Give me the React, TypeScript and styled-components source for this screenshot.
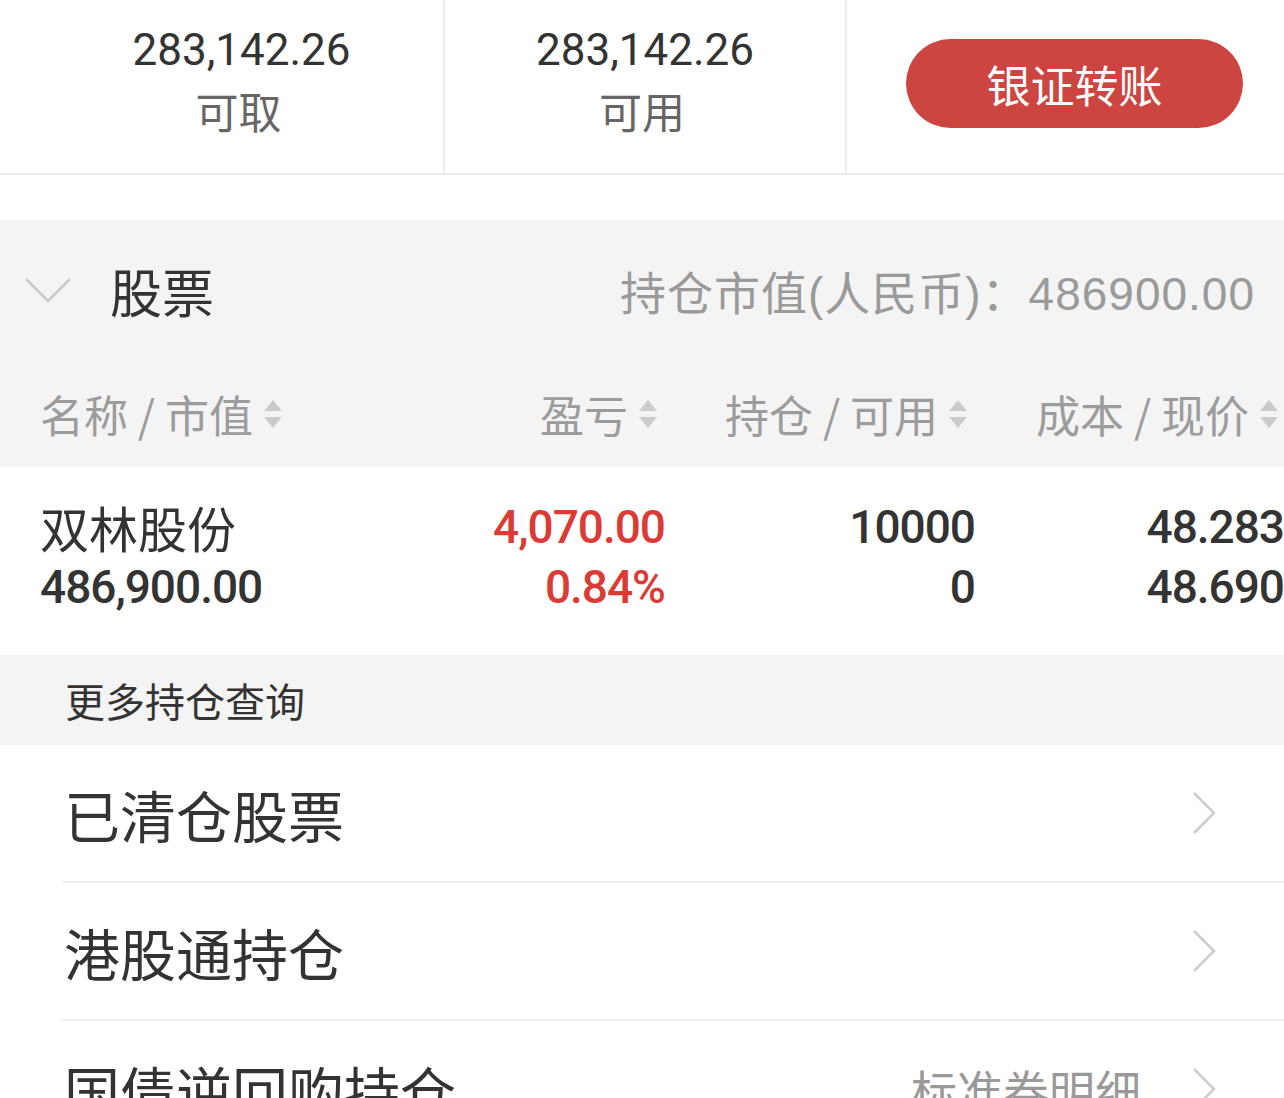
import styled, { createGlobalStyle } from "styled-components";

const GlobalStyle = createGlobalStyle`
  html, body {
    margin: 0;
    padding: 0;
    background: #ffffff;
    overflow: hidden;
  }
`;

const SortIcon = () => (
  <svg width="20" height="32" viewBox="0 0 20 32">
    <polygon points="10,2 19,13 1,13" fill="#cbcbcb" />
    <polygon points="1,19 19,19 10,30" fill="#cbcbcb" />
  </svg>
);

const ChevronRight = () => (
  <svg width="26" height="44" viewBox="0 0 26 44">
    <polyline
      points="3,2 23,22 3,42"
      fill="none"
      stroke="#cdcdcd"
      strokeWidth="2.5"
    />
  </svg>
);

const ChevronDown = () => (
  <svg width="48" height="28" viewBox="0 0 48 28">
    <polyline
      points="2,3 24,25 46,3"
      fill="none"
      stroke="#cbcbcb"
      strokeWidth="2.5"
    />
  </svg>
);

const moreItems = [
  { title: "已清仓股票", extra: "" },
  { title: "港股通持仓", extra: "" },
  { title: "国债逆回购持仓", extra: "标准券明细" },
];

const App = () => {
  return (
    <Page>
      <GlobalStyle />
      <Summary>
        <SummaryCell $divider $shift={40}>
          <Amount>283,142.26</Amount>
          <AmountLabel>可取</AmountLabel>
        </SummaryCell>
        <SummaryCell $divider $shift={0}>
          <Amount>283,142.26</Amount>
          <AmountLabel>可用</AmountLabel>
        </SummaryCell>
        <SummaryCell $shift={18}>
          <TransferBtn>银证转账</TransferBtn>
        </SummaryCell>
      </Summary>
      <Spacer />

      <StockSection>
        <SectionHeader>
          <ChevronDown />
          <SectionTitle>股票</SectionTitle>
          <MarketValue>持仓市值(人民币)：486900.00</MarketValue>
        </SectionHeader>
        <TableHead>
          <HeadCell>
            名称 / 市值
            <SortIcon />
          </HeadCell>
          <HeadCell $right>
            盈亏
            <SortIcon />
          </HeadCell>
          <HeadCell $right>
            持仓 / 可用
            <SortIcon />
          </HeadCell>
          <HeadCell $right>
            成本 / 现价
            <SortIcon />
          </HeadCell>
        </TableHead>
      </StockSection>

      <StockRow>
        <DataCell>
          <StockName>双林股份</StockName>
          <DataNum>486,900.00</DataNum>
        </DataCell>
        <DataCell $right>
          <DataNum $red>4,070.00</DataNum>
          <DataNum $red>0.84%</DataNum>
        </DataCell>
        <DataCell $right>
          <DataNum>10000</DataNum>
          <DataNum>0</DataNum>
        </DataCell>
        <DataCell $right>
          <DataNum>48.283</DataNum>
          <DataNum>48.690</DataNum>
        </DataCell>
      </StockRow>

      <MoreHeader>更多持仓查询</MoreHeader>
      <MoreList>
        {moreItems.map((item) => (
          <MoreItem key={item.title}>
            <MoreTitle>{item.title}</MoreTitle>
            {item.extra && <MoreExtra>{item.extra}</MoreExtra>}
            <ChevronRight />
          </MoreItem>
        ))}
      </MoreList>
    </Page>
  );
};

export default App;

const Page = styled.div`
  width: 1284px;
  background: #ffffff;
  font-family: Roboto, "Noto Sans CJK SC", sans-serif;
  color: #333333;
`;

const Summary = styled.div`
  display: grid;
  grid-template-columns: 445px 402px 1fr;
  height: 173px;
  border-bottom: 2px solid #ececec;
`;

const SummaryCell = styled.div<{ $divider?: boolean; $shift: number }>`
  display: flex;
  flex-direction: column;
  align-items: center;
  justify-content: center;
  padding-left: ${(p) => p.$shift}px;
  border-right: ${(p) => (p.$divider ? "2px solid #ececec" : "none")};
`;

const Amount = styled.div`
  font-size: 44px;
  line-height: 56px;
  color: #333333;
  margin-top: -2px;
`;

const AmountLabel = styled.div`
  font-size: 43px;
  line-height: 72px;
  color: #666666;
  margin-left: -6px;
`;

const TransferBtn = styled.button`
  width: 337px;
  height: 89px;
  border: none;
  border-radius: 45px;
  background-color: #cc4541;
  color: #ffffff;
  font-family: "Noto Sans CJK SC", sans-serif;
  font-size: 44px;
  cursor: pointer;
  margin-top: -6px;
`;

const Spacer = styled.div`
  height: 45px;
  background: #ffffff;
`;

const StockSection = styled.div`
  background: #f4f4f4;
`;

const SectionHeader = styled.div`
  height: 140px;
  display: flex;
  align-items: center;
  padding: 0 29px 0 24px;
`;

const SectionTitle = styled.div`
  font-size: 52px;
  color: #333333;
  margin-left: 38px;
`;

const MarketValue = styled.div`
  margin-left: auto;
  font-family: "Liberation Sans", "Noto Sans CJK SC", sans-serif;
  font-size: 46px;
  color: #9a9a9a;
  letter-spacing: 1px;
`;

const TableHead = styled.div`
  height: 107px;
  display: grid;
  grid-template-columns: 360px 263px 310px 1fr;
  padding-left: 40px;
  align-items: center;
`;

const HeadCell = styled.div<{ $right?: boolean }>`
  display: flex;
  align-items: center;
  justify-content: ${(p) => (p.$right ? "flex-end" : "flex-start")};
  gap: 10px;
  padding-right: ${(p) => (p.$right ? "5px" : "0")};
  font-family: "Noto Sans CJK SC", sans-serif;
  font-size: 44px;
  color: #9c9c9c;
  white-space: pre;
`;

const StockRow = styled.div`
  height: 188px;
  box-sizing: border-box;
  display: grid;
  grid-template-columns: 360px 263px 310px 1fr;
  padding: 30px 0 0 42px;
`;

const DataCell = styled.div<{ $right?: boolean }>`
  display: flex;
  flex-direction: column;
  align-items: ${(p) => (p.$right ? "flex-end" : "flex-start")};
  ${(p) => !p.$right && "margin-left: -2px;"}
`;

const StockName = styled.div`
  font-family: "Noto Sans CJK SC", sans-serif;
  font-size: 49px;
  line-height: 60px;
  color: #333333;
`;

const DataNum = styled.div<{ $red?: boolean }>`
  font-size: 46px;
  line-height: 60px;
  font-weight: 500;
  letter-spacing: -1px;
  color: ${(p) => (p.$red ? "#db3b35" : "#333333")};
`;

const MoreHeader = styled.div`
  height: 90px;
  display: flex;
  align-items: center;
  padding-left: 65px;
  background: #f4f4f4;
  font-family: "Noto Sans CJK SC", sans-serif;
  font-size: 40px;
  color: #333333;
`;

const MoreList = styled.div`
  background: #ffffff;
`;

const MoreItem = styled.div`
  height: 136px;
  display: flex;
  align-items: center;
  margin-left: 62px;
  padding: 0 67px 0 2px;
  border-bottom: 2px solid #efefef;

  &:last-child {
    border-bottom: none;
  }
`;

const MoreTitle = styled.div`
  font-family: "Noto Sans CJK SC", sans-serif;
  font-size: 56px;
  color: #333333;
  margin-right: auto;
`;

const MoreExtra = styled.div`
  font-family: "Noto Sans CJK SC", sans-serif;
  font-size: 46px;
  color: #999999;
  margin-right: 50px;
`;
